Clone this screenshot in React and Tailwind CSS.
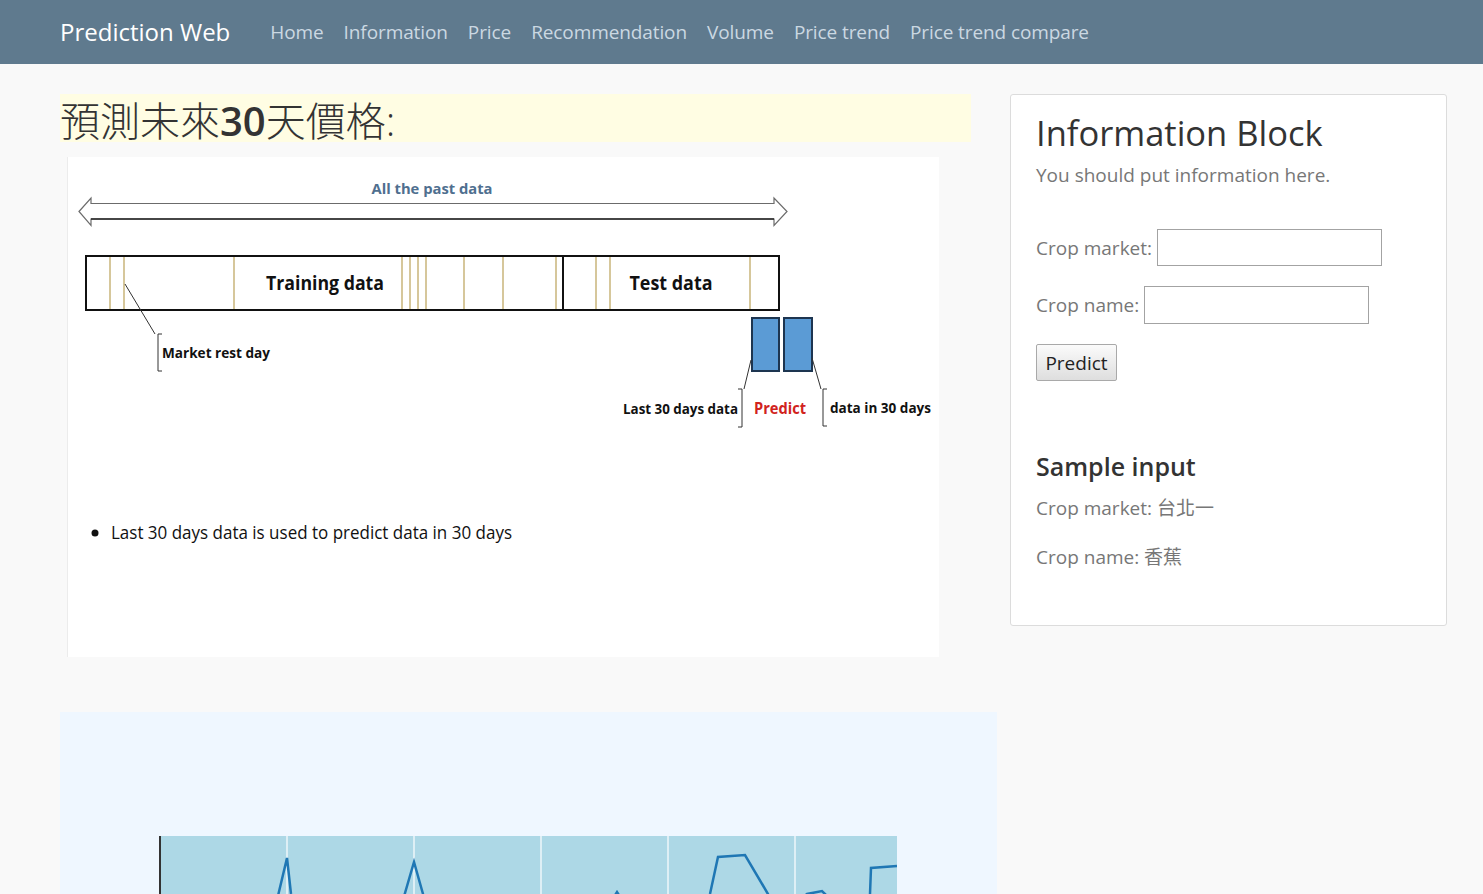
import React from 'react';

const navLinks = ['Home', 'Information', 'Price', 'Recommendation', 'Volume', 'Price trend', 'Price trend compare'];
const restDays = [109, 123, 233, 401, 409, 417, 425, 463, 502, 555, 595, 609, 749];

function Diagram() {
  return (
    <svg viewBox="67 157 871 500" width="871" height="500" overflow="visible" className="block" style={{ fontFamily: '"Open Sans", sans-serif' }}>
      <rect x="67" y="157" width="871" height="500" fill="#ffffff" />
      <text x="431" y="194" textAnchor="middle" fontSize="15" fontWeight="700" fill="#4f6f8f" textLength="121" lengthAdjust="spacingAndGlyphs">All the past data</text>
      <polygon points="78,211.5 90,198 90,203.5 773,203.5 773,198 786,211.5 773,225.5 773,219 90,219 90,225.5" fill="#ffffff" stroke="#6b6b6b" strokeWidth="1.2" />
      <line x1="90" y1="219" x2="773" y2="219" stroke="#222" strokeWidth="1.4" />

      <rect x="85" y="256" width="693" height="54" fill="#ffffff" stroke="#111" strokeWidth="2" />
      {restDays.map((x) => (
        <line key={x} x1={x} y1="257" x2={x} y2="309" stroke="#d6c79b" strokeWidth="2" />
      ))}
      <line x1="562" y1="256" x2="562" y2="310" stroke="#111" strokeWidth="2" />
      <text x="324" y="290" textAnchor="middle" fontSize="20" fontWeight="700" fill="#111" textLength="118" lengthAdjust="spacingAndGlyphs">Training data</text>
      <text x="670" y="290" textAnchor="middle" fontSize="20" fontWeight="700" fill="#111" textLength="83" lengthAdjust="spacingAndGlyphs">Test data</text>

      <polyline points="124,284 154,334" fill="none" stroke="#333" strokeWidth="1" />
      <polyline points="161,334 157,334 157,371 161,371" fill="none" stroke="#333" strokeWidth="1" />
      <text x="161" y="358" fontSize="15" fontWeight="700" fill="#111" textLength="108" lengthAdjust="spacingAndGlyphs">Market rest day</text>

      <rect x="751" y="318" width="27" height="53" fill="#5b9bd5" stroke="#1d3550" strokeWidth="2" />
      <rect x="783" y="318" width="28" height="53" fill="#5b9bd5" stroke="#1d3550" strokeWidth="2" />
      <polyline points="750,360 743,389" fill="none" stroke="#333" strokeWidth="1" />
      <polyline points="737,389 741,389 741,427 737,427" fill="none" stroke="#333" strokeWidth="1" />
      <text x="737" y="414" textAnchor="end" fontSize="15" fontWeight="700" fill="#111" textLength="115" lengthAdjust="spacingAndGlyphs">Last 30 days data</text>
      <text x="753" y="414" fontSize="16" fontWeight="700" fill="#d1231d" textLength="52" lengthAdjust="spacingAndGlyphs">Predict</text>
      <polyline points="811,358 820,389" fill="none" stroke="#333" strokeWidth="1" />
      <polyline points="826,389 822,389 822,426 826,426" fill="none" stroke="#333" strokeWidth="1" />
      <text x="829" y="413" fontSize="15" fontWeight="700" fill="#111" textLength="101" lengthAdjust="spacingAndGlyphs">data in 30 days</text>

      <circle cx="94" cy="533" r="3.5" fill="#111" />
      <text x="110" y="539" fontSize="19" fill="#111" textLength="401" lengthAdjust="spacingAndGlyphs">Last 30 days data is used to predict data in 30 days</text>
    </svg>
  );
}

function Chart() {
  return (
    <svg viewBox="60 712 937 400" width="937" height="400" className="block">
      <rect x="160" y="836" width="737" height="276" fill="#add8e6" />
      {[287, 414, 541, 668, 795].map((x) => (
        <line key={x} x1={x} y1="836" x2={x} y2="1112" stroke="#ffffff" strokeWidth="1.2" />
      ))}
      <line x1="160" y1="836" x2="160" y2="1112" stroke="#333" strokeWidth="2" />
      <polyline
        points="160,960 270,930 277,900 287,858 291,894 296,930 400,925 403,900 414,862 423,894 428,930 600,930 612,900 617,892 622,900 700,930 710,894 718,857 745,855 768,894 780,925 800,900 807,894 822,891 862,930 870,894 871,868 897,866"
        fill="none"
        stroke="#1f77b4"
        strokeWidth="2.5"
      />
    </svg>
  );
}

export default function App() {
  return (
    <div className="min-h-screen bg-[#f9f9f9]" style={{ fontFamily: '"Open Sans", "Noto Sans CJK TC", sans-serif' }}>
      <nav className="h-16 bg-[#5f7a8e] flex items-center pl-[60px]">
        <span className="text-[24px] text-white mr-[40px]">Prediction Web</span>
        <div className="flex gap-[20px]">
          {navLinks.map((l) => (
            <a key={l} href="#" className="text-[19px] text-[#cbd8e2] tracking-[-0.1px]">
              {l}
            </a>
          ))}
        </div>
      </nav>

      <div className="flex pl-[60px] pr-[36px] pt-[30px] gap-[13px]">
        <div className="w-[937px] shrink-0">
          <h1 className="w-[911px] h-12 bg-[#fffde3] flex items-center pt-[6px] text-[40px] text-[#333] leading-none">
            <span className="font-light">預測未來</span>
            <span className="font-semibold">30</span>
            <span className="font-light">天價格:</span>
          </h1>
          <div className="mt-[15px] ml-[7px] w-[871px] border-l border-[#ececec]">
            <Diagram />
          </div>
          <div className="mt-[55px] bg-[#eff7ff] overflow-hidden">
            <Chart />
          </div>
        </div>

        <div className="flex-1 self-start bg-white border border-[#dcdcdc] rounded-[3px] px-[25px] pt-[12px] h-[532px]">
          <h2 className="text-[34.5px] font-medium text-[#333]">Information Block</h2>
          <p className="text-[19px] text-[#777] mt-[2px]">You should put information here.</p>

          <div className="mt-[40px] flex items-center gap-[5px]">
            <span className="text-[19px] text-[#777]">Crop market:</span>
            <input className="w-[225px] h-[37px] border border-[#a3a3a3] bg-white" />
          </div>
          <div className="mt-[20px] flex items-center gap-[5px]">
            <span className="text-[19px] text-[#777]">Crop name:</span>
            <input className="w-[225px] h-[38px] border border-[#a3a3a3] bg-white" />
          </div>
          <button className="mt-[20px] w-[81px] h-[37px] border border-[#a9a9a9] rounded-[2px] bg-gradient-to-b from-[#fbfbfb] to-[#dedede] text-[19px] text-[#222]">
            Predict
          </button>

          <h3 className="mt-[67px] text-[25px] font-semibold text-[#333]">Sample input</h3>
          <p className="mt-[8px] text-[19px] text-[#777]">Crop market: 台北一</p>
          <p className="mt-[21px] text-[19px] text-[#777]">Crop name: 香蕉</p>
        </div>
      </div>
    </div>
  );
}
